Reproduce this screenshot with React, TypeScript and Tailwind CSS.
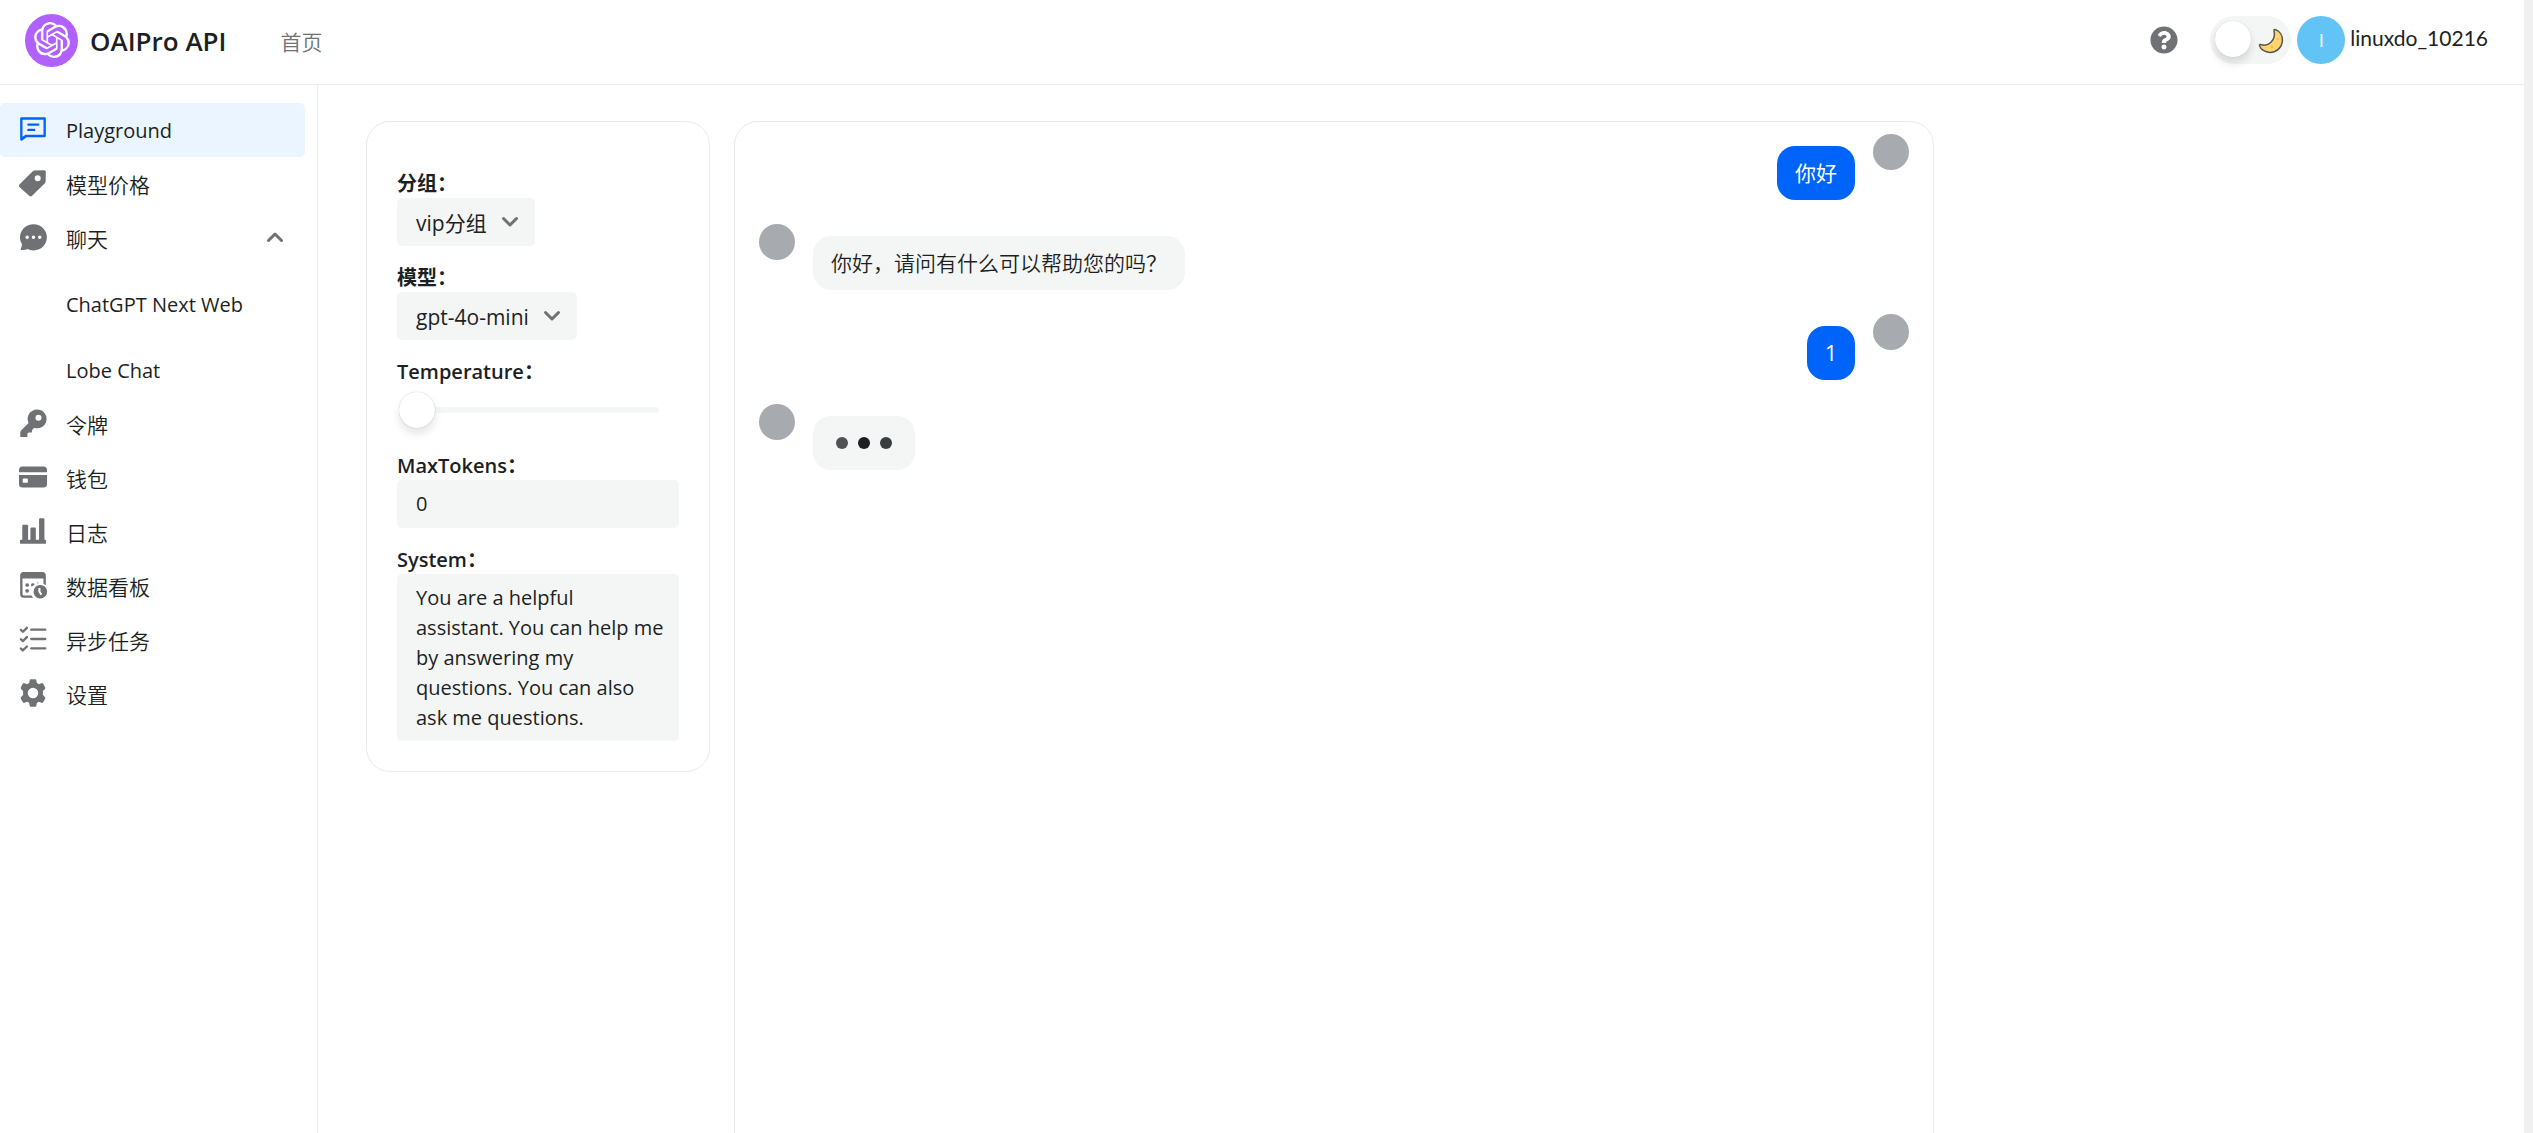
import { useState } from "react";
import type { ReactNode } from "react";
import { FaQuestionCircle } from "react-icons/fa";
import { SiOpenai } from "react-icons/si";
import clsx from "clsx";

const icons: Record<string, ReactNode> = {
  playground: (
    <path
      fillRule="evenodd"
      d="M2 2h20a1 1 0 0 1 1 1v15a1 1 0 0 1-1 1H6.6l-3.8 2.8A1.1 1.1 0 0 1 1 21V3a1 1 0 0 1 1-1Zm1 2v14.6L5.6 17H21V4H3Zm5 3.2h8.5a1 1 0 0 1 0 2H8a1 1 0 0 1 0-2Zm0 4.600h5a1 1 0 0 1 0 2H8a1 1 0 0 1 0-2Z"
    />
  ),
  price: (
    <path
      fillRule="evenodd"
      d="M13.200 1.300 21.500 1A1.600 1.600 0 0 1 23 2.600l-.2 8.200a2 2 0 0 1-.6 1.400L11.200 23a1.800 1.800 0 0 1-2.500 0L.6 15.600a1.800 1.800 0 0 1 0-2.600L11.800 1.900a2 2 0 0 1 1.400-.6ZM16 10.600a2.600 2.600 0 1 0 0-5.200 2.600 2.600 0 0 0 0 5.200Z"
    />
  ),
  chat: (
    <path
      fillRule="evenodd"
      d="M12.500 1a11.300 11.300 0 1 1-5.200 21.300c-1.200.6-3 .9-4.800.9-1 0-1.300-.9-.8-1.600.6-.9.800-2.300.8-3.500A11.300 11.300 0 0 1 12.500 1ZM7 13.800a1.500 1.500 0 1 0 0-3 1.500 1.500 0 0 0 0 3Zm5.400 0a1.500 1.500 0 1 0 0-3 1.500 1.500 0 0 0 0 3Zm5.400 0a1.500 1.500 0 1 0 0-3 1.500 1.500 0 0 0 0 3Z"
    />
  ),
  token: (
    <path
      fillRule="evenodd"
      d="M15.600.5a8 8 0 1 1-2.500 15.600l-1.900 1.800v1.600a.6.600 0 0 1-.6.600H8.200l-1 .9v2.500a.6.600 0 0 1-.6.600H1.700a.6.600 0 0 1-.6-.6v-3.600c0-.5.2-1 .5-1.300l6.600-6.600A8 8 0 0 1 15.600.5Zm1.100 9.600a2.600 2.600 0 1 0 0-5.200 2.600 2.600 0 0 0 0 5.200Z"
    />
  ),
  wallet: (
    <path
      fillRule="evenodd"
      d="M3 3h18a3 3 0 0 1 3 3v2H0V6a3 3 0 0 1 3-3ZM0 10.200h24V18a3 3 0 0 1-3 3H3a3 3 0 0 1-3-3v-7.800Zm4 3a.8.800 0 0 0-.8.800v2.200c0 .4.4.8.800.8h2.800c.4 0 .8-.4.8-.8V14a.8.800 0 0 0-.8-.8H4Z"
    />
  ),
  log: (
    <path d="M18.200 1h2.600a1 1 0 0 1 1 1v17.500h.4a1 1 0 0 1 1 1V22a1 1 0 0 1-1 1H1.800a1 1 0 0 1-1-1v-1.500a1 1 0 0 1 1-1h1V7.600a1 1 0 0 1 1-1h3a1 1 0 0 1 1 1v11.900h2V10a1 1 0 0 1 1-1h2.600a1 1 0 0 1 1 1v9.500h2.800V2a1 1 0 0 1 1-1Z" />
  ),
  board: (
    <>
      <path
        fillRule="evenodd"
        d="M4 .8h16a3 3 0 0 1 3 3v8.500a7 7 0 0 0-2-1.100V6.500H3V20c0 .6.400 1 1 1h6.800c.4.700.800 1.400 1.400 2H4a3 3 0 0 1-3-3V3.800a3 3 0 0 1 3-3Z"
      />
      <circle cx="7" cy="12" r="1.600" />
      <circle cx="7" cy="17" r="1.600" />
      <path d="M10.300 12a1.600 1.600 0 0 1 3.100-.5l-2.300 1.800a1.600 1.600 0 0 1-.8-1.300ZM15 10.400c.4-.6 1.500-.6 2 0Z" />
      <path
        fillRule="evenodd"
        d="M17.500 12a5.800 5.800 0 1 1 0 11.500 5.800 5.800 0 0 1 0-11.500Zm-.9 2.500v3.600l1.900 2.600 1.400-1-1.500-2.100v-3.100h-1.800Z"
      />
    </>
  ),
  task: (
    <g fill="none" stroke="currentColor" strokeWidth="2" strokeLinecap="round" strokeLinejoin="round">
      <path d="M1.600 4.200 3.300 5.800 6.800 2.400M1.600 12.200l1.700 1.600 3.500-3.400M1.600 20.200l1.700 1.600 3.500-3.400M10.500 4h12M10.500 12h12M10.500 20h12" />
    </g>
  ),
  setting: (
    <path
      fillRule="evenodd"
      d="M10.300.2h3.400c.6 0 1 .4 1.100.9l.5 2.400c.6.200 1.100.5 1.700.9l2.300-.8c.5-.2 1.100 0 1.400.5l1.700 3c.3.500.2 1-.2 1.400l-1.800 1.900c.2.900.2 2.300 0 3.200l1.800 1.900c.4.400.5.900.2 1.400l-1.700 3c-.3.500-.9.700-1.400.5l-2.300-.8c-.6.400-1.100.7-1.700.9l-.5 2.400c-.1.500-.5.900-1.100.9h-3.400c-.6 0-1-.4-1.100-.9l-.5-2.400c-.6-.2-1.100-.5-1.700-.9l-2.300.8c-.5.200-1.100 0-1.400-.5l-1.700-3c-.3-.5-.2-1 .2-1.400l1.800-1.900a9 9 0 0 1 0-3.200L1.800 8.500c-.4-.4-.5-.9-.2-1.400l1.700-3c.3-.5.9-.7 1.400-.5l2.300.8c.6-.4 1.100-.7 1.700-.9l.5-2.400c.1-.5.5-.9 1.100-.9ZM12 16.500a4.500 4.500 0 1 0 0-9 4.500 4.500 0 0 0 0 9Z"
    />
  ),
};

const links = [
  { href: "#playground", label: "Playground", icon: "playground" },
  { href: "#pricing", label: "模型价格", icon: "price" },
  {
    href: "#chat",
    label: "聊天",
    icon: "chat",
    subLinks: [
      { href: "#chat/next", label: "ChatGPT Next Web" },
      { href: "#chat/lobe", label: "Lobe Chat" },
    ],
  },
  { href: "#token", label: "令牌", icon: "token" },
  { href: "#topup", label: "钱包", icon: "wallet" },
  { href: "#log", label: "日志", icon: "log" },
  { href: "#detail", label: "数据看板", icon: "board" },
  { href: "#task", label: "异步任务", icon: "task" },
  { href: "#setting", label: "设置", icon: "setting" },
];

const messages = [
  { id: 1, role: "user", content: "你好" },
  { id: 2, role: "assistant", content: "你好，请问有什么可以帮助您的吗？" },
  { id: 3, role: "user", content: "1" },
  { id: 4, role: "assistant", content: "", loading: true },
];

const systemPrompt = [
  "You are a helpful",
  "assistant. You can help me",
  "by answering my",
  "questions. You can also",
  "ask me questions.",
].join("\n");

function Chevron({ up = false, className }: { up?: boolean; className?: string }) {
  return (
    <svg
      viewBox="0 0 18 12"
      className={clsx("h-3 w-[18px]", className)}
      fill="none"
      stroke="#6f7175"
      strokeWidth="3"
      strokeLinecap="round"
      strokeLinejoin="round"
      aria-hidden="true"
    >
      <path d={up ? "M2.500 9.500 9 3l6.500 6.500" : "M2.500 2.500 9 9l6.500-6.500"} />
    </svg>
  );
}

function Header() {
  const [dark, setDark] = useState(false);

  return (
    <header className="flex h-[85px] shrink-0 items-center justify-between border-b border-[#e9eaea] pr-9 pl-[25px]">
      <div className="flex items-center">
        <a href="#home" className="flex items-center gap-3 pb-1">
          <span className="flex size-[53px] items-center justify-center rounded-full bg-[#b061ff] text-white">
            <SiOpenai className="size-9" />
          </span>
          <span className="pt-0.5 text-[26px] font-semibold">OAIPro API</span>
        </a>
        <a href="#home" className="ml-[54px] text-[21px] font-[350] text-[#6f7175]">
          首页
        </a>
      </div>

      <div className="flex items-center pb-1 font-[Lato,'Noto_Sans_CJK_SC',sans-serif]">
        <button type="button" aria-label="Help" className="mr-8 text-[#6f7175]">
          <FaQuestionCircle className="size-7" />
        </button>
        <label className="relative mr-1.5 block h-12 w-[81px] rounded-full bg-[#f4f6f5]">
          <input
            type="checkbox"
            role="switch"
            aria-label="Theme"
            checked={dark}
            onChange={(e) => setDark(e.target.checked)}
            className="peer absolute inset-0 size-full cursor-pointer appearance-none rounded-full"
          />
          <span className="pointer-events-none absolute top-[5px] left-[5px] size-9 rounded-full bg-white shadow-[0_6px_9px_rgba(0,0,0,0.12),0_0_1px_rgba(0,0,0,0.2)] peer-checked:left-10" />
          <svg viewBox="0 0 26 26" className="pointer-events-none absolute top-3 right-[7px] size-[26px]" aria-hidden="true">
            <path
              d="M17.200 1.500C21.500 3 24.800 7.200 24.400 12.600 24 19.400 18.400 24.600 12 24.400 7 24.300 2.600 21.500 1.500 17.600c-.2-.9.500-1.400 1.300-1.100 3.900 1.300 7.500.5 10.200-2.200 2.800-2.800 4.100-6.900 3-11.600-.2-.9.400-1.500 1.200-1.200Z"
              fill="#fcd570"
              stroke="#5a5649"
              strokeWidth="1.500"
            />
            <circle cx="20" cy="11" r="1" fill="#f2b84f" />
            <circle cx="14" cy="19" r="1.200" fill="#f2b84f" />
          </svg>
        </label>
        <button type="button" className="flex items-center gap-[5px]">
          <span className="flex size-12 items-center justify-center rounded-full bg-[#62c3f6] text-[18px] text-white">
            l
          </span>
          <span className="pb-1 text-[21px]">linuxdo_10216</span>
        </button>
      </div>
    </header>
  );
}

function Sidebar() {
  const [open, setOpen] = useState(true);

  return (
    <nav className="w-[318px] shrink-0 border-r border-[#e9eaea] pt-[18px] pr-3">
      <ul>
        {links.map((link, i) => {
          const row = clsx(
            "flex h-[54px] w-full items-center rounded-[5px] pt-0.5 pr-[21px] pl-[19px] text-left",
            i > 0 && "text-[21px] font-[350]"
          );
          const inner = (
            <>
              <svg
                viewBox="0 0 24 24"
                className={clsx("mr-[19px] mb-1 size-7", i === 0 ? "text-[#0064fa]" : "text-[#6f7175]")}
                fill="currentColor"
                aria-hidden="true"
              >
                {icons[link.icon]}
              </svg>
              {link.label}
            </>
          );

          return (
            <li key={link.href}>
              {link.subLinks ? (
                <button type="button" aria-expanded={open} onClick={() => setOpen(!open)} className={row}>
                  {inner}
                  <Chevron up={open} className="mb-1 ml-auto" />
                </button>
              ) : (
                <a href={link.href} className={clsx(row, i === 0 && "bg-[#eaf5ff]")}>
                  {inner}
                </a>
              )}
              {link.subLinks && open && (
                <ul>
                  {link.subLinks.map((subLink) => (
                    <li key={subLink.href} className="mt-3">
                      <a href={subLink.href} className="flex h-[54px] items-center pt-0.5 pl-[66px]">
                        {subLink.label}
                      </a>
                    </li>
                  ))}
                </ul>
              )}
            </li>
          );
        })}
      </ul>
    </nav>
  );
}

function Field({ id, label, children }: { id: string; label: string; children: ReactNode }) {
  return (
    <div className="mt-[18px]">
      <label htmlFor={id} className="block h-7 leading-7 font-semibold">
        {label}：
      </label>
      {children}
    </div>
  );
}

function Settings() {
  const [temperature, setTemperature] = useState(0);

  return (
    <section className="w-[344px] shrink-0 self-start rounded-3xl border border-[#e9eaea] p-[30px]">
      <Field id="group" label="分组">
        <div className="relative w-[138px]">
          <select
            id="group"
            className="block h-12 w-full appearance-none rounded-[5px] bg-[#f4f6f5] pt-0.5 pl-[19px] text-[21px]"
          >
            <option>vip分组</option>
          </select>
          <Chevron className="pointer-events-none absolute top-[18px] right-4" />
        </div>
      </Field>
      <Field id="model" label="模型">
        <div className="relative w-[180px]">
          <select
            id="model"
            className="block h-12 w-full appearance-none rounded-[5px] bg-[#f4f6f5] pt-0.5 pl-[19px] text-[21px]"
          >
            <option>gpt-4o-mini</option>
          </select>
          <Chevron className="pointer-events-none absolute top-[18px] right-4" />
        </div>
      </Field>
      <Field id="temperature" label="Temperature">
        <div className="relative h-12">
          <div className="absolute top-[21px] right-5 left-5 h-1.5 rounded-full bg-[#f4f6f5]" />
          <input
            id="temperature"
            type="range"
            min={0}
            max={1}
            step={0.1}
            value={temperature}
            onChange={(e) => setTemperature(Number(e.target.value))}
            className="absolute inset-x-0.5 top-1.5 h-9 appearance-none bg-transparent [&::-webkit-slider-thumb]:size-9 [&::-webkit-slider-thumb]:appearance-none [&::-webkit-slider-thumb]:rounded-full [&::-webkit-slider-thumb]:bg-white [&::-webkit-slider-thumb]:shadow-[0_6px_9px_rgba(0,0,0,0.1),0_0_1px_rgba(0,0,0,0.3)]"
          />
        </div>
      </Field>
      <Field id="max-tokens" label="MaxTokens">
        <input
          id="max-tokens"
          type="text"
          defaultValue="0"
          className="block h-12 w-full rounded-[5px] bg-[#f4f6f5] px-[19px] pb-0.5"
        />
      </Field>
      <Field id="system" label="System">
        <textarea
          id="system"
          rows={5}
          defaultValue={systemPrompt}
          className="block h-[167px] w-full resize-none overflow-hidden rounded-[5px] bg-[#f4f6f5] pt-[9px] pr-2 pl-[19px]"
        />
      </Field>
    </section>
  );
}

function Chat() {
  return (
    <section className="flex h-screen w-[1200px] flex-col gap-6 rounded-3xl border border-[#e9eaea] px-6 py-3">
      {messages.map((message) => (
        <div
          key={message.id}
          className={clsx("flex items-start gap-[18px]", message.role === "user" && "flex-row-reverse")}
        >
          <span className="size-9 shrink-0 rounded-full bg-[#a7abb0]" />
          <div
            className={clsx(
              "mt-3 flex h-[54px] items-center rounded-[18px] px-[18px] text-[21px]",
              message.role === "user" ? "bg-[#0064fa] text-white" : "bg-[#f4f6f5] font-[350]"
            )}
          >
            {message.loading ? (
              <span className="flex gap-[10px] px-[5px]" role="status" aria-label="Loading">
                <span className="size-3 rounded-full bg-[#4f5154]" />
                <span className="size-3 rounded-full bg-[#1c1f23]" />
                <span className="size-3 rounded-full bg-[#3b3e41]" />
              </span>
            ) : (
              message.content
            )}
          </div>
        </div>
      ))}
    </section>
  );
}

export default function App() {
  return (
    <div className="flex h-screen overflow-hidden bg-white font-['Open_Sans','Noto_Sans_CJK_SC',sans-serif] text-[20px] leading-[30px] text-[#1c1f23]">
      <div className="flex min-w-0 flex-1 flex-col">
        <Header />
        <div className="flex min-h-0 flex-1">
          <Sidebar />
          <main className="flex min-w-0 flex-1 gap-6 pt-9 pl-12">
            <Settings />
            <Chat />
          </main>
        </div>
      </div>
      <div className="w-[9px] shrink-0 bg-[#f0f0f0]" />
    </div>
  );
}
